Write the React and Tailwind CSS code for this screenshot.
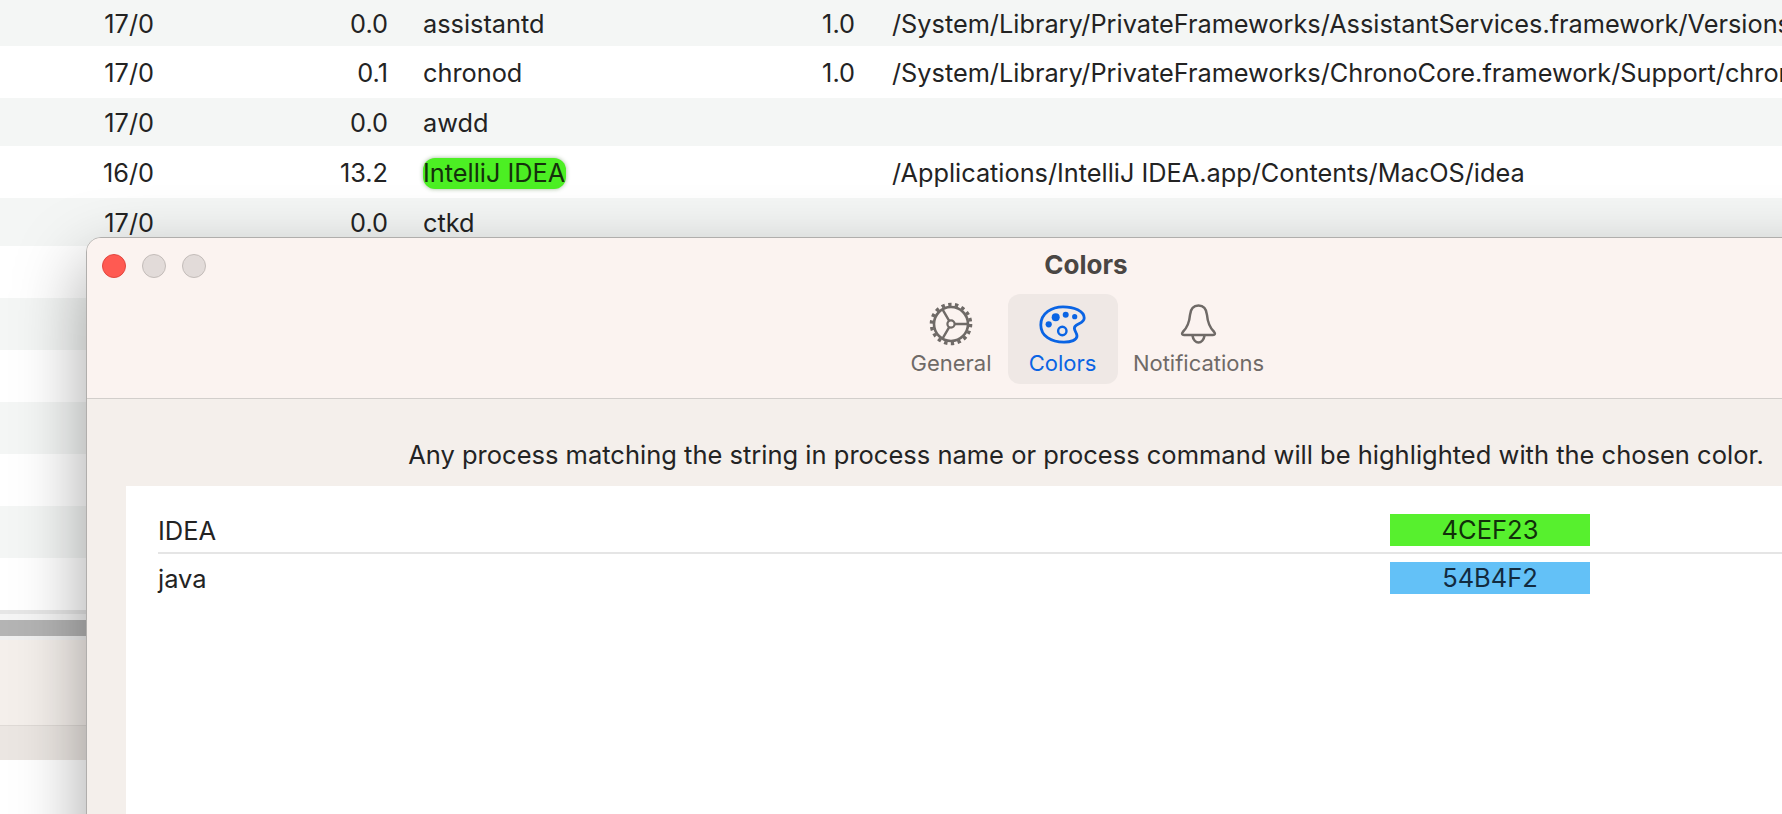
const rows = [
  { h: "h-[46px]", bg: "bg-[#f4f6f5]", a: "17/0", b: "0.0", n: "assistantd", v: "1.0", p: "/System/Library/PrivateFrameworks/AssistantServices.framework/Versions/A/Support/assistantd" },
  { h: "h-[52px]", bg: "bg-white", a: "17/0", b: "0.1", n: "chronod", v: "1.0", p: "/System/Library/PrivateFrameworks/ChronoCore.framework/Support/chronod" },
  { h: "h-[48px]", bg: "bg-[#f4f6f5]", a: "17/0", b: "0.0", n: "awdd" },
  { h: "h-[52px]", bg: "bg-white", a: "16/0", b: "13.2", n: "IntelliJ IDEA", hl: true, p: "/Applications/IntelliJ IDEA.app/Contents/MacOS/idea" },
  { h: "h-[48px]", bg: "bg-[#f4f6f5]", a: "17/0", b: "0.0", n: "ctkd" },
  { h: "h-[52px]", bg: "bg-white" },
  { h: "h-[52px]", bg: "bg-[#f4f6f5]" },
  { h: "h-[52px]", bg: "bg-white" },
  { h: "h-[52px]", bg: "bg-[#f4f6f5]" },
  { h: "h-[52px]", bg: "bg-white" },
  { h: "h-[52px]", bg: "bg-[#f4f6f5]" },
  { h: "h-[52px]", bg: "bg-white" },
];

function Row({ r }) {
  return (
    <div className={`${r.h} ${r.bg} flex items-center pt-[2px] whitespace-nowrap overflow-hidden text-[25.3px] text-[#232323]`}>
      <div className="w-[154px] shrink-0 text-right">{r.a}</div>
      <div className="w-[234px] shrink-0 text-right">{r.b}</div>
      <div className="w-[367px] shrink-0 pl-[35px]">
        {r.hl ? (
          <span className="inline-flex h-[31px] items-center rounded-[12px] bg-[#4cef23] pr-[1px] shadow-[0_0_4px_rgba(40,100,20,0.45)] text-[#14300c]">{r.n}</span>
        ) : (
          r.n
        )}
      </div>
      <div className="w-[100px] shrink-0 text-right">{r.v}</div>
      <div className="pl-[37px]">{r.p}</div>
    </div>
  );
}

function Gear() {
  return (
    <svg width="44" height="44" viewBox="0 0 44 44" fill="none" stroke="#6f6a67">
      <circle cx="22" cy="22" r="17" strokeWidth="2.6" />
      <circle cx="22" cy="22" r="19.6" strokeWidth="3.4" strokeDasharray="3.4 3.44" />
      <circle cx="22" cy="22" r="3.6" strokeWidth="2.2" />
      <path d="M25.6 22H39M20.2 18.9 13.5 7.3M20.2 25.1 13.5 36.7" strokeWidth="2.4" />
    </svg>
  );
}

function Palette() {
  return (
    <svg width="47" height="39" viewBox="0 0 47 39" fill="none">
      <path
        d="M1.8 20C1.8 8 13 1.8 24 1.8C35 1.8 45.2 6 45.2 13C45.2 18 38.5 18.5 36 21.5C33.6 24.5 38 27 38 31C38 35 32 37.2 25 37.2C12 37.2 1.8 31 1.8 20Z"
        stroke="#0a64e4"
        strokeWidth="2.8"
      />
      <circle cx="16.7" cy="12.3" r="4" fill="#0a64e4" />
      <circle cx="26.7" cy="9.7" r="3" fill="#0a64e4" />
      <circle cx="35.7" cy="11.7" r="2.6" fill="#0a64e4" />
      <circle cx="9.7" cy="19.3" r="3.1" fill="#0a64e4" />
      <circle cx="23.3" cy="26" r="4.2" stroke="#0a64e4" strokeWidth="2.4" />
    </svg>
  );
}

function Bell() {
  return (
    <svg width="37" height="40" viewBox="0 0 37 40" fill="none" stroke="#6f6a67" strokeWidth="2.5" strokeLinejoin="round">
      <path d="M18.5 1.5C13 1.5 10.5 6 10 11C9.4 18 8 23 2.8 28C1.4 29.5 2 31 4 31H33C35 31 35.6 29.5 34.2 28C29 23 27.6 18 27 11C26.5 6 24 1.5 18.5 1.5Z" />
      <path d="M12.5 31.5C13 36 16 38.6 18.5 38.6C21 38.6 24 36 24.5 31.5" />
    </svg>
  );
}

function Tab({ icon, label, active, width }) {
  return (
    <div
      className={`${width} ${active ? "bg-[#efe8e5] text-[#0a64e4]" : "text-[#6f6a67]"} h-[90px] rounded-[12px] flex flex-col items-center pt-[8px]`}
    >
      <div className="h-[44px] flex items-center justify-center">{icon}</div>
      <div className="mt-[2px] text-[22px] leading-[30px] whitespace-nowrap">{label}</div>
    </div>
  );
}

export default function App() {
  return (
    <div className="relative h-[814px] w-full overflow-hidden bg-white font-['Inter','Liberation_Sans',sans-serif]">
      {rows.map((r, i) => (
        <Row key={i} r={r} />
      ))}
      <div className="h-[4px] bg-[#e6e6e6]" />
      <div className="h-[6px] bg-[#f5f5f5]" />
      <div className="h-[16px] bg-[#b4b4b4]" />
      <div className="h-[4px] bg-[#f0f0f0]" />
      <div className="h-[86px] bg-[#f4efeb] border-b border-[#dfdad6]" />
      <div className="h-[34px] bg-[#ebe6e2]" />
      <div className="h-[54px] bg-white" />

      <div className="absolute left-[86px] top-[237px] w-[2000px] h-[800px] rounded-t-[15px] border border-[#b0aeac] bg-[#f4efeb] shadow-[0_26px_70px_rgba(0,0,0,0.36)] overflow-hidden">
        <div className="relative h-[161px] bg-[#fbf3f0] border-b border-[#d2cecb] flex flex-col items-center">
          <div className="absolute left-[15px] top-[16px] flex gap-[16px]">
            <div className="size-[24px] rounded-full bg-[#ff5a52] border border-[#e2463f]" />
            <div className="size-[24px] rounded-full bg-[#e2dbd9] border border-[#c3bcb9]" />
            <div className="size-[24px] rounded-full bg-[#e2dbd9] border border-[#c3bcb9]" />
          </div>
          <div className="mt-[10px] h-[34px] leading-[34px] text-[26px] font-bold text-[#4a4644]">Colors</div>
          <div className="mt-[12px] flex gap-[6px] pl-[2px]">
            <Tab icon={<Gear />} label="General" width="w-[101px]" />
            <Tab icon={<Palette />} label="Colors" active width="w-[110px]" />
            <Tab icon={<Bell />} label="Notifications" width="w-[150px]" />
          </div>
        </div>
        <div className="h-[87px] flex items-end justify-center pb-[15px] text-[25.5px] leading-[32px] text-[#232323] whitespace-nowrap">
          Any process matching the string in process name or process command will be highlighted with the chosen color.
        </div>
        <div className="mx-[39px] h-[560px] bg-white pl-[32px] text-[25.5px] text-[#232323]">
          <div className="h-[68px] pt-[22px] flex items-center border-b-2 border-[#e5e5e5]">
            <div className="w-[1232px] pt-[2px]">IDEA</div>
            <div className="w-[200px] h-[32px] bg-[#57f02e] flex items-center justify-center text-[#11300a]">4CEF23</div>
          </div>
          <div className="h-[48px] flex items-center">
            <div className="w-[1232px] pt-[2px]">java</div>
            <div className="w-[200px] h-[32px] bg-[#63c1f7] flex items-center justify-center text-[#122b3f]">54B4F2</div>
          </div>
        </div>
      </div>
    </div>
  );
}
